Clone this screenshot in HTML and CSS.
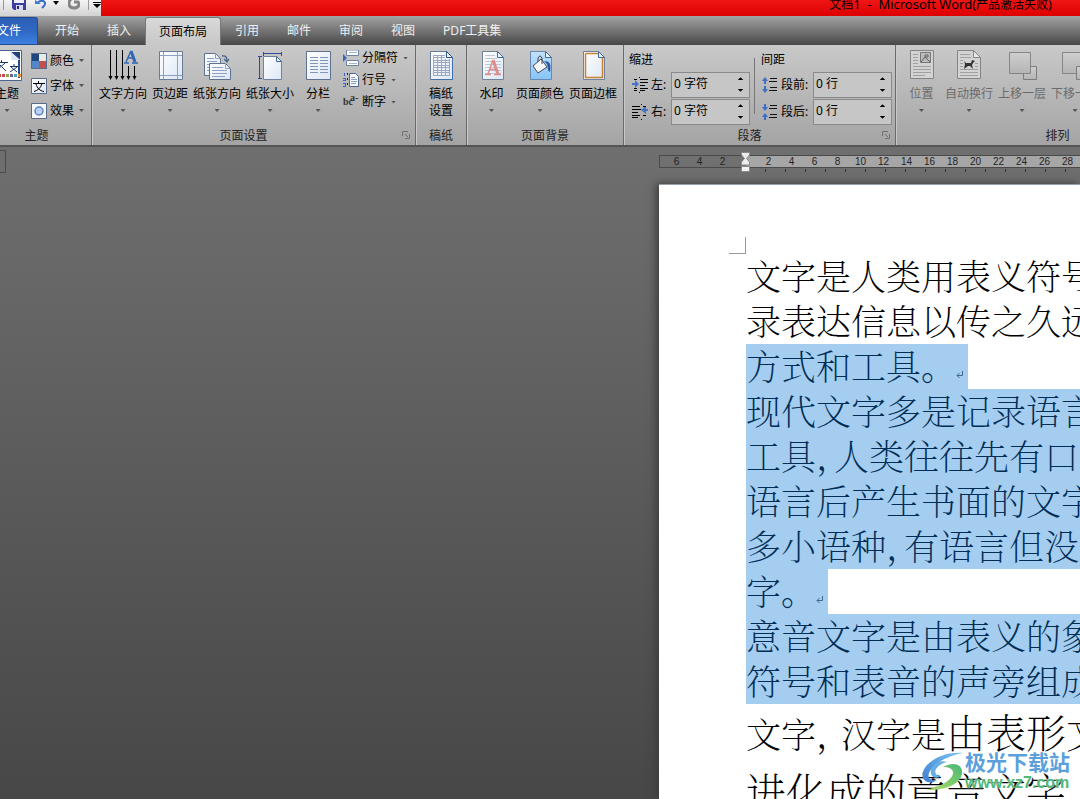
FILE: index.html
```html
<!DOCTYPE html>
<html lang="zh-CN">
<head>
<meta charset="utf-8">
<title>文档1 - Microsoft Word</title>
<link rel="stylesheet" href="styles.css">
</head>
<body>
<svg class="defs" aria-hidden="true">
  <defs>
    <linearGradient id="paper" x1="0" y1="0" x2="1" y2="1"><stop offset="0" stop-color="#fff"/><stop offset="1" stop-color="#dce6f5"/></linearGradient>
    <linearGradient id="sky" x1="0" y1="0" x2="0" y2="1"><stop offset="0" stop-color="#c4e2fa"/><stop offset="1" stop-color="#85c3f7"/></linearGradient>
    <linearGradient id="grey" x1="0" y1="0" x2="0" y2="1"><stop offset="0" stop-color="#cfcfcf"/><stop offset="1" stop-color="#b4b4b4"/></linearGradient>
    <linearGradient id="swirlBlue" x1="0" y1="1" x2="1" y2="0"><stop offset="0" stop-color="#3f7fd0"/><stop offset="1" stop-color="#79c4f0"/></linearGradient>
    <linearGradient id="swirlGreen" x1="0" y1="1" x2="1" y2="0"><stop offset="0" stop-color="#b5dc62"/><stop offset="1" stop-color="#46b878"/></linearGradient>
  </defs>
</svg>
<div class="window">
  <header class="titlebar">
    <div class="quick">
      <i class="quick-sep"></i>
      <button aria-label="保存"><svg width="14" height="11" viewBox="0 0 14 11"><path d="M0 0h14v10H2L0 8z" fill="#3b3f9c"/><path d="M2 0h10v3H2z" fill="#eef"/><path d="M4 5h7v5H4z" fill="#d5d8ee"/><path d="M5 6h2v3H5z" fill="#25296f"/></svg></button>
      <button class="undo" aria-label="撤消"><svg width="13" height="9" viewBox="0 0 13 9"><path d="M0 0v4h6z" fill="#3e78d0"/><path d="M3 2C9-1 13 3 7 8" fill="none" stroke="#3569c4" stroke-width="2"/></svg></button>
      <svg class="quick-arrow" width="6" height="4" viewBox="0 0 6 4"><path d="M0 0h6L3 4z"/></svg>
      <button aria-label="恢复"><svg width="12" height="10" viewBox="0 0 12 10"><path d="M3-1C-1 3 1 8 6 8s6-4 4-6H6" fill="none" stroke="#858585" stroke-width="3"/></svg></button>
      <i class="quick-sep end"></i>
      <svg class="more" width="8" height="6" viewBox="0 0 8 6"><path d="M0 0h8v1H0zM0 2h8L4 6z"/></svg>
    </div>
    <h1 class="title"><span class="zh">文档</span>1&nbsp; -&nbsp; Microsoft Word(<span class="zh">产品激活失败</span>)</h1>
  </header>

  <nav class="tabs">
    <button class="tab file">文件</button>
    <button class="tab">开始</button>
    <button class="tab">插入</button>
    <button class="tab active">页面布局</button>
    <button class="tab">引用</button>
    <button class="tab">邮件</button>
    <button class="tab">审阅</button>
    <button class="tab">视图</button>
    <button class="tab">PDF工具集</button>
  </nav>

  <section class="ribbon">
    <div class="group themes">
      <div class="tools">
        <button class="big"><svg width="32" height="32" viewBox="0 0 32 32"><path d="M1.500 1.500h29v30h-29z" fill="#fff" stroke="#4c6390"/><path d="M28 29V11" fill="none" stroke="#274a86" stroke-width="2"/><path d="M20 3l9 8V3z" fill="#20427c"/><path d="M20 3v8h9z" fill="#dce6f6"/><path d="M4 13.500h13M10.500 11v2M5 22l9-8M7 14l8 8M19 17.500h8M23 15v2M19 23l7-5M20 18l6 5" fill="none" stroke="#173766"/><path d="M7 25h3v3H7z" fill="#b94848"/><path d="M11 25h3v3h-3z" fill="#c34a4a"/><path d="M15 25h3v3h-3z" fill="#8aa84c"/><path d="M19 25h3v3h-3z" fill="#775b9d"/><path d="M23 25h3v3h-3z" fill="#3fa6bd"/><path d="M27 25h3v3h-3z" fill="#ee8b34"/></svg><span>主题</span><i class="arrow"></i></button>
        <div class="stack wide">
          <button class="small"><svg width="16" height="16" viewBox="0 0 16 16"><path d="M0 0h16v16H0z" fill="#596a8a"/><path d="M1 1h7v7H1z" fill="#1d477e"/><path d="M8 1h7v7H8z" fill="#ecebdf"/><path d="M1 8h7v7H1z" fill="#5487c6"/><path d="M8 8h7v7H8z" fill="#c4504e"/></svg><span>颜色</span><i class="arrow"></i></button>
          <button class="small"><svg width="16" height="16" viewBox="0 0 16 16"><path d="M.5.5h15v15H.5z" fill="url(#paper)" stroke="#596a8a"/><path d="M2 5.500h12M7.500 3v2M3 13.500c4-1 7-4 8-8M5 6c1 4 4 7 8 7.500" fill="none" stroke="#000"/></svg><span>字体</span><i class="arrow"></i></button>
          <button class="small"><svg width="16" height="16" viewBox="0 0 16 16"><path d="M.5.5h15v15H.5z" fill="#f7f9fd" stroke="#596a8a"/><circle cx="8" cy="8" r="4" fill="#b8d2f5" stroke="#5c83c0" stroke-width="1.500"/></svg><span>效果</span><i class="arrow"></i></button>
        </div>
      </div>
      <div class="caption">主题</div>
    </div>

    <div class="group setup">
      <div class="tools">
        <button class="big"><svg width="32" height="32" viewBox="0 0 32 32"><path d="M3.500 1v28M9.500 1v28M15.500 1v28M21.500 17v12M27.500 17v12" stroke="#000"/><path d="M1.500 27h4l-2 4zM7.500 27h4l-2 4zM13.500 27h4l-2 4zM19.500 27h4l-2 4zM25.500 27h4l-2 4z"/><path d="M17 14h5M25 14h6M19 13l5-11M21 9h6" fill="none" stroke="#2f66b5" stroke-width="1.500"/><path d="M24 2l4 11" stroke="#2f66b5" stroke-width="3"/></svg><span>文字方向</span><i class="arrow"></i></button>
        <button class="big"><svg width="32" height="32" viewBox="0 0 32 32"><path d="M5.500 2.500h23v28h-23z" fill="url(#paper)" stroke="#6a7c98"/><path d="M9.500 3v27M23.500 3v27M6 6.500h22M6 26.500h22" stroke="#8ba0c2"/></svg><span>页边距</span><i class="arrow"></i></button>
        <button class="big"><svg width="32" height="32" viewBox="0 0 32 32"><path d="M3.500 4.500h11l5 5v17h-16z" fill="url(#paper)" stroke="#5d7191"/><path d="M14.500 4.500v5h5M6 9.500h7M6 12.500h10M6 15.500h8M6 18.500h5M6 21.500h3" fill="none" stroke="#8ba0c2"/><path d="M8.500 14.500h16l5 5v11h-21z" fill="url(#paper)" stroke="#5d7191"/><path d="M24.500 14.500v5h5M11 18.500h11M11 21.500h15M11 24.500h15M11 27.500h13" fill="none" stroke="#8ba0c2"/><path d="M21 7c4-1 5 2 5 5M23 10l3 3 2-3" fill="none" stroke="#49648f" stroke-width="1.300"/></svg><span>纸张方向</span><i class="arrow"></i></button>
        <button class="big"><svg width="32" height="32" viewBox="0 0 32 32"><path d="M9.500 7.500h13l5 5v18h-18z" fill="url(#paper)" stroke="#71829c"/><path d="M22.500 7.500v5h5z" fill="#eef3fb" stroke="#42679b"/><path d="M9 4.500h19M9.500 3v4M27.500 3v4M5.500 7v22M4 7.500h4M4 29.500h4" stroke="#32489a" fill="none"/></svg><span>纸张大小</span><i class="arrow"></i></button>
        <button class="big columns"><svg width="32" height="32" viewBox="0 0 32 32"><path d="M4.500 2.500h24v28h-24z" fill="url(#paper)" stroke="#5d7191"/><path d="M8 8.500h8M8 11.500h8M8 14.500h8M8 17.500h8M8 20.500h8M8 23.500h8M18 8.500h8M18 11.500h8M18 14.500h8M18 17.500h8M18 20.500h8M18 23.500h8" stroke="#7e96bd"/></svg><span>分栏</span><i class="arrow"></i></button>
        <div class="stack">
          <button class="small"><svg width="16" height="16" viewBox="0 0 16 16"><path d="M0 4v8l4-4z" fill="#3c68b8"/><path d="M3.500 0v5.500h12V0z" fill="#fff" stroke="#6d83a6"/><path d="M3.500 15.500v-5h12v5z" fill="#fff" stroke="#6d83a6"/><path d="M6 2.500h8M6 13.500h8" stroke="#9fb2d0"/></svg><span>分隔符</span><i class="arrow"></i></button>
          <button class="small"><svg width="16" height="16" viewBox="0 0 16 16"><path d="M1.500 1v3M0 6.500h3M0 8.500h3M0 11.500h3M0 14.500h3M2.500 6v3M2.500 11v4" fill="none" stroke="#3966c2"/><path d="M4.500 1v2M4.500 6v2M4.500 11v2" stroke="#222"/><path d="M6.500 1.500h6l3 3v10h-9z" fill="#f5f8fd" stroke="#52688b"/><path d="M8 5.500h4M8 7.500h6M8 9.500h6M8 11.500h5" stroke="#8da2c0"/></svg><span>行号</span><i class="arrow"></i></button>
          <button class="small"><span class="hyphen"><b>bc</b><b class="raised">a-</b></span><span>断字</span><i class="arrow"></i></button>
        </div>
      </div>
      <div class="caption">页面设置</div>
      <button class="launch" aria-label="页面设置对话框"><svg width="8" height="8" viewBox="0 0 8 8"><path d="M.5 5V.5H6M3 3l3 3M7.500 3v4.500H3" fill="none" stroke="#707070"/></svg></button>
    </div>

    <div class="group grid-paper">
      <div class="tools">
        <button class="big"><svg width="32" height="32" viewBox="0 0 32 32"><path d="M5.500 2.500h16l6 6v22h-22z" fill="url(#paper)" stroke="#6a7c98"/><path d="M8 6.500h12M8 8.500h12M8 11.500h17M8 13.500h17M8 16.500h17M8 18.500h17M8 21.500h17M8 23.500h17M8 26.500h17M8.500 6v21M12.500 6v21M16.500 6v21M20.500 10v17M24.500 10v17" stroke="#9aa9c0"/><path d="M21.500 2.500v6h6z" fill="#edf3fc" stroke="#2f527f"/><path d="M27.500 9v21.500H6" fill="none" stroke="#4370ab"/></svg><span>稿纸<br>设置</span></button>
      </div>
      <div class="caption">稿纸</div>
    </div>

    <div class="group backdrop">
      <div class="tools">
        <button class="big watermark-btn"><svg width="32" height="32" viewBox="0 0 32 32"><path d="M6.500 2.500h15l6 6v22h-21z" fill="url(#paper)" stroke="#71829c"/><path d="M9 6.500h10M9 9.500h12M9 12.500h16M9 15.500h16M9 18.500h16M9 21.500h16M9 24.500h16" stroke="#bdc7d6"/><path d="M21.500 2.500v6h6z" fill="#edf3fc" stroke="#42679b"/><path d="M9 25.500h6M18 25.500h7M12 25l5-14M14 20.500h7" fill="none" stroke="#df8d8b" stroke-width="1.500"/><path d="M17 11l5 14" stroke="#df8d8b" stroke-width="3"/></svg><span>水印</span><i class="arrow"></i></button>
        <button class="big"><svg width="32" height="32" viewBox="0 0 32 32"><path d="M6.500 2.500h15l6 6v22h-21z" fill="url(#sky)" stroke="#6688b3"/><path d="M21.500 2.500v6h6z" fill="#edf3fc" stroke="#42679b"/><path d="M9 17l8-7 6 8-9 6z" fill="#f6f6f6" stroke="#445"/><path d="M14 13V9q2-4 4 0v6" fill="none" stroke="#445"/><path d="M20 12c7 0 7 4 6 11-3-1-2-6-3-8z" fill="#2858a6"/></svg><span>页面颜色</span><i class="arrow"></i></button>
        <button class="big"><svg width="32" height="32" viewBox="0 0 32 32"><path d="M6.500 2.500h15l6 6v22h-21z" fill="url(#paper)" stroke="#71829c"/><path d="M8.500 4.500H21M8.500 4.500v24h17V9" fill="none" stroke="#c98232" stroke-width="1.500"/><path d="M21.500 2.500v6h6z" fill="#edf3fc" stroke="#42679b"/></svg><span>页面边框</span></button>
      </div>
      <div class="caption">页面背景</div>
    </div>

    <div class="group paragraph">
      <div class="tools">
        <div class="fields">
          <h2>缩进</h2>
          <div class="field"><svg width="16" height="16" viewBox="0 0 16 16"><path d="M0 6h3V3l4 4-4 4V8H0z" fill="#4474c9"/><path d="M2 2.500h3M8 2.500h8M8 5.500h8M8 8.500h5M2 11.500h3M8 11.500h8M2 13.500h3M8 13.500h5M7.500 0v1M7.500 15v1" stroke="#000"/></svg><label for="left">左:</label><span class="spin"><input id="left" type="text" value="0 字符"><span class="steps"><button aria-label="增加"><i class="up"></i></button><button aria-label="减少"><i class="down"></i></button></span></span></div>
          <div class="field"><svg width="16" height="16" viewBox="0 0 16 16"><path d="M16 5h-2V2l-5 4 5 4V7h2z" fill="#4474c9"/><path d="M0 2.500h8M11 2.500h3M0 5.500h9M0 8.500h6M0 11.500h8M11 11.500h3M0 13.500h6M9.500 0v1M9.500 15v1" stroke="#000"/></svg><label for="right">右:</label><span class="spin"><input id="right" type="text" value="0 字符"><span class="steps"><button aria-label="增加"><i class="up"></i></button><button aria-label="减少"><i class="down"></i></button></span></span></div>
        </div>
        <i class="divider"></i>
        <div class="fields">
          <h2>间距</h2>
          <div class="field"><svg width="16" height="16" viewBox="0 0 16 16"><path d="M3 0l3 4H4v3H2V4H0zM3 16l3-4H4V9H2v3H0z" fill="#3e6fc6"/><path d="M8 1.500h7M7 4.500h8M8 10.500h7M7 13.500h8" stroke="#111"/></svg><label for="before">段前:</label><span class="spin"><input id="before" type="text" value="0 行"><span class="steps"><button aria-label="增加"><i class="up"></i></button><button aria-label="减少"><i class="down"></i></button></span></span></div>
          <div class="field"><svg width="16" height="16" viewBox="0 0 16 16"><path d="M3 7l3-4H4V0H2v3H0zM3 9l3 4H4v3H2v-3H0z" fill="#3e6fc6"/><path d="M8 1.500h7M7 4.500h8M8 10.500h7M7 13.500h8" stroke="#111"/></svg><label for="after">段后:</label><span class="spin"><input id="after" type="text" value="0 行"><span class="steps"><button aria-label="增加"><i class="up"></i></button><button aria-label="减少"><i class="down"></i></button></span></span></div>
        </div>
      </div>
      <div class="caption">段落</div>
      <button class="launch" aria-label="段落对话框"><svg width="8" height="8" viewBox="0 0 8 8"><path d="M.5 5V.5H6M3 3l3 3M7.500 3v4.500H3" fill="none" stroke="#707070"/></svg></button>
    </div>

    <div class="group arrange">
      <div class="tools">
        <button class="big position" disabled><svg width="32" height="32" viewBox="0 0 32 32"><path d="M4.500 1.500h23v28h-23z" fill="#d3d3d3" stroke="#858585"/><path d="M7 5.500h5M7 8.500h5M7 11.500h5M7 14.500h5M7 17.500h18M7 20.500h18M7 23.500h18M7 26.500h12" stroke="#a0a0a0"/><path d="M14.500 3.500h10v10h-10z" fill="#bbb" stroke="#777"/><path d="M15 13l4-5 5 5M19 6h3v2h-3z" stroke="#666" fill="none"/></svg><span>位置</span><i class="arrow"></i></button>
        <button class="big" disabled><svg width="32" height="32" viewBox="0 0 32 32"><path d="M4.500 1.500h16l7 7v21h-23z" fill="#d3d3d3" stroke="#858585"/><path d="M20.500 1.500v7h7z" fill="#e8e8e8" stroke="#858585"/><path d="M7 5.500h10M7 8.500h11M7 11.500h3M7 14.500h3M7 17.500h3M22 14.500h3M22 17.500h3M7 20.500h18M7 23.500h18M7 26.500h18" stroke="#a0a0a0"/><path d="M11 12l2 2h5l1-3 3 1-2 2-1 2 1 4-3-3h-2l-4 3 1-5z" fill="#333"/></svg><span>自动换行</span><i class="arrow"></i></button>
        <button class="big" disabled><svg width="32" height="32" viewBox="0 0 32 32"><path d="M17.500 17.500h13v13h-13z" fill="url(#grey)" stroke="#7c7c7c"/><path d="M3.500 3.500h21v21h-21z" fill="url(#grey)" stroke="#858585"/></svg><span>上移一层</span><i class="arrow"></i></button>
        <button class="big" disabled><svg width="32" height="32" viewBox="0 0 32 32"><path d="M3.500 3.500h21v21h-21z" fill="url(#grey)" stroke="#858585"/><path d="M17.500 17.500h13v13h-13z" fill="url(#grey)" stroke="#7c7c7c"/></svg><span>下移一层</span><i class="arrow"></i></button>
      </div>
      <div class="caption">排列</div>
    </div>
  </section>

  <main class="workspace">
    <div class="corner"></div>
    <div class="canvas">
      <div class="ruler">
        <span>6</span><span>4</span><span>2</span><span class="origin"><svg width="9" height="20" viewBox="0 0 9 20"><path d="M.5.5h8V3l-3 3.500 3 3.500v3h-8v-3l3-3.500L.5 3z" fill="#eee" stroke="#888"/><path d="M.5 14.500h8v5h-8z" fill="#f3f3f3" stroke="#888"/></svg></span><span>2</span><span>4</span><span>6</span><span>8</span><span>10</span><span>12</span><span>14</span><span>16</span><span>18</span><span>20</span><span>22</span><span>24</span><span>26</span><span>28</span>
      </div>
      <div class="ticks"></div>
      <article class="page">
        <i class="crop"></i>
        <p class="line">文字是人类用表义符号</p>
        <p class="line">录表达信息以传之久远</p>
        <p class="line sel short">方式和工具。<svg class="mark" width="8" height="8" viewBox="0 0 8 8"><path d="M6.500 0v4.500H1M3.500 2L1 4.500 3.500 7" fill="none" stroke="#3f6a90"/></svg></p>
        <p class="line sel">现代文字多是记录语言</p>
        <p class="line sel">工具<span class="half">，</span>人类往往先有口头</p>
        <p class="line sel">语言后产生书面的文字</p>
        <p class="line sel">多小语种<span class="half">，</span>有语言但没有</p>
        <p class="line sel short">字。<svg class="mark" width="8" height="8" viewBox="0 0 8 8"><path d="M6.500 0v4.500H1M3.500 2L1 4.500 3.500 7" fill="none" stroke="#3f6a90"/></svg></p>
        <p class="line sel">意音文字是由表义的象</p>
        <p class="line sel">符号和表音的声旁组成</p>
        <p class="line tall">文字<span class="half loose">，</span>汉字是<span class="large">由表形文</span></p>
        <p class="line last">进化成的意音文字，</p>
      </article>
    </div>
  </main>
  <aside class="brand">
    <svg width="42" height="40" viewBox="0 0 42 40"><path d="M42 1C24-1 5 9 2 20c-3 10 8 13 14 8-6 1-10-2-8-7C11 13 25 4 42 1z" fill="url(#swirlBlue)"/><path d="M26 10c-9-3-18 5-16 12 1 4 6 5 10 2-5 0-7-3-5-7 2-3 6-6 11-7z" fill="#66aee4"/><path d="M22 15c10-6 20-3 19 6-1 11-17 18-37 17 15-3 26-9 28-16 1-5-4-7-10-7z" fill="url(#swirlGreen)"/></svg>
    <div class="brand-text"><strong>极光下载站</strong><span>www.xz7.com</span></div>
  </aside>
</div>
</body>
</html>
```
FILE: styles.css
```css
* { box-sizing: border-box; }
body {
  margin: 0;
  font: 12px/16px "Noto Sans", "Noto Sans CJK SC", sans-serif;
  color: #000;
}
h1, h2, p { margin: 0; font-weight: normal; }
button { border: 0; padding: 0; background: none; font: inherit; color: inherit; white-space: nowrap; }
svg { display: block; flex: none; }
.defs { position: absolute; width: 0; height: 0; }
.window { position: relative; display: flex; flex-direction: column; height: 100vh; overflow: hidden; }

/* title bar */
.titlebar { display: flex; height: 16px; flex: none; background: linear-gradient(#f01616, #dd0000); }
.quick { display: flex; align-items: flex-start; width: 101px; padding-left: 3px; background: linear-gradient(#f4f4f4, #d2d2d2); overflow: hidden; }
.quick-sep { width: 1px; height: 10px; margin-right: 8px; background: #999; }
.undo { margin-left: 9px; }
.quick-arrow { margin: 1px 9px 0 5px; }
.quick-sep.end { margin: 0 4px 0 8px; }
.more { margin-top: 2px; }
.title { margin-left: auto; padding-right: 28px; font-size: 13px; line-height: 9px; white-space: nowrap; }
.zh { font-size: 12px; }

/* tabs */
.tabs { display: flex; height: 29px; flex: none; padding-top: 1px; background: linear-gradient(#a3a3a3, #474747); }
.tab { height: 28px; padding: 0 14px; color: #f0f0f0; }
.tab.file { width: 38px; margin-right: 3px; padding: 0 16px 0 0; direction: rtl; background: linear-gradient(#2c5fb4, #2f68c4 50%, #3c80e0); border: 1px solid #1f4c96; border-left: 0; border-radius: 0 3px 0 0; color: #fff; }
.tab.active { color: #000; background: linear-gradient(#d8d8d8, #c8c8c8); border: 1px solid #777; border-bottom: 0; border-radius: 3px 3px 0 0; padding: 0 13px; }

/* ribbon */
.ribbon { display: flex; height: 102px; flex: none; background: linear-gradient(#c9c9c9, #a4a4a4); border-bottom: 2px solid #545454; }
.group { position: relative; display: flex; flex-direction: column; flex: none; border-right: 1px solid #6a6a6a; box-shadow: 1px 0 #c9c9c9; }
.tools { display: flex; flex: 1; gap: 1px; }
.caption { height: 17px; text-align: center; color: #222; }
.themes { width: 92px; }
.themes .caption { padding-right: 18px; }
.themes .big { margin-left: -11px; }
.setup { width: 324px; }
.setup .tools { padding-left: 5px; }
.setup .caption { padding-right: 20px; }
.grid-paper { width: 51px; }
.grid-paper .tools { justify-content: center; }
.backdrop { width: 157px; }
.backdrop .tools { padding-left: 3px; }
.paragraph { width: 272px; }
.paragraph .caption { padding-right: 20px; }
.arrange { width: 324px; }
.arrange .tools { padding-left: 5px; }
.big { display: flex; flex-direction: column; align-items: center; align-self: flex-start; padding: 4px 2px 0; line-height: 17px; }
.big span { margin-top: 4px; }
.columns { min-width: 42px; }
.position { min-width: 41px; }
.watermark-btn { min-width: 43px; }
.big:disabled { color: #6b6b6b; }
.arrow { width: 5px; height: 3px; background: #555; clip-path: polygon(0 0, 100% 0, 50% 100%); }
.big .arrow { margin-top: 7px; }
.stack { display: flex; flex-direction: column; padding: 2px 0 0 3px; }
.small { display: flex; align-items: center; gap: 3px; height: 22px; }
.small .arrow { margin-left: 2px; }
.stack.wide { padding: 3px 0 0 5px; }
.wide .small { height: 25px; }
.hyphen { display: flex; width: 16px; font: 10px/12px "Liberation Serif", serif; color: #333; }
.raised { margin: -4px 0 0 -3px; }
.launch { position: absolute; right: 5px; bottom: 6px; }

.fields { padding: 6px 0 0 5px; }
.fields h2 { height: 20px; font-size: 12px; line-height: 17px; }
.field { display: flex; align-items: center; height: 27px; padding-left: 3px; }
.field svg { margin-right: 3px; }
.field label { min-width: 20px; }
.fields:last-child .field { padding-left: 1px; }
.fields:last-child label { min-width: 32px; }
.spin { display: flex; width: 79px; height: 26px; border: 1px solid #8a8a8a; background: #c6c6c6; }
.spin input { width: 60px; border: 0; padding: 0 0 2px 2px; background: none; font: inherit; }
.steps { display: flex; flex-direction: column; justify-content: space-evenly; }
.steps button { display: flex; width: 17px; height: 10px; align-items: center; justify-content: center; }
.up, .down { width: 6px; height: 3px; background: #000; clip-path: polygon(0 0, 100% 0, 50% 100%); }
.up { clip-path: polygon(50% 0, 100% 100%, 0 100%); }
.divider { width: 1px; height: 56px; margin: 13px 0 0 3px; background: #777; }

/* document area */
.workspace { display: flex; flex: 1; min-height: 0; background: linear-gradient(#6f6f6f, #474747); }
.corner { width: 6px; height: 23px; margin-top: 3px; border: 1px solid #4b4b4b; border-left: 0; }
.canvas { display: flex; flex-direction: column; flex: 1; min-width: 0; margin-left: 653px; padding-top: 8px; }
.ruler { display: flex; flex: none; height: 13px; padding-left: 5px; border: 1px solid #4a4a4a; border-right: 0; background: linear-gradient(90deg, #707070 86px, #a6a6a6 86px); font: 10px/11px "Liberation Sans", sans-serif; color: #222; }
.ruler span { flex: none; width: 23px; text-align: center; }
.origin svg { margin: -4px auto 0; }
.ticks { height: 3px; flex: none; margin: 1px 0 12px 106px; background: repeating-linear-gradient(90deg, #333 0 1px, transparent 1px 20px); }
.page { flex: 1; min-height: 0; padding-left: 87px; background: #fff; border-top: 1px solid #98a0a8; box-shadow: -3px 0 8px #3c3c3c; overflow: hidden; }
.crop { display: block; width: 17px; height: 17px; margin: 52px 0 0 -17px; border: 1px solid #999; border-width: 0 1px 1px 0; }
.line { height: 45px; font: 200 35px/42px "SimSun", "Noto Serif CJK SC", "Noto Sans CJK SC", serif; white-space: nowrap; }
.sel { background: #a5cdf0; color: #002d55; }
.short { display: flex; width: max-content; }
.mark { align-self: flex-end; margin: 0 4px 10px 0; }
.half { display: inline-block; width: 18px; }
.loose { width: 25px; }
.tall { height: 56px; line-height: 54px; }
.large { font-size: 40px; }
.last { font-size: 40px; line-height: 60px; }

/* site mark */
.brand { position: absolute; right: 10px; bottom: 6px; display: flex; align-items: center; gap: 2px; }
.brand-text { display: flex; flex-direction: column; color: #5b9fdb; }
.brand strong { font-size: 21px; line-height: 22px; text-shadow: 0 0 2px #fff; }
.brand-text span { font: bold 16px/20px "Liberation Sans", sans-serif; color: #4fb97a; text-shadow: 0 0 2px #fff; }
```
